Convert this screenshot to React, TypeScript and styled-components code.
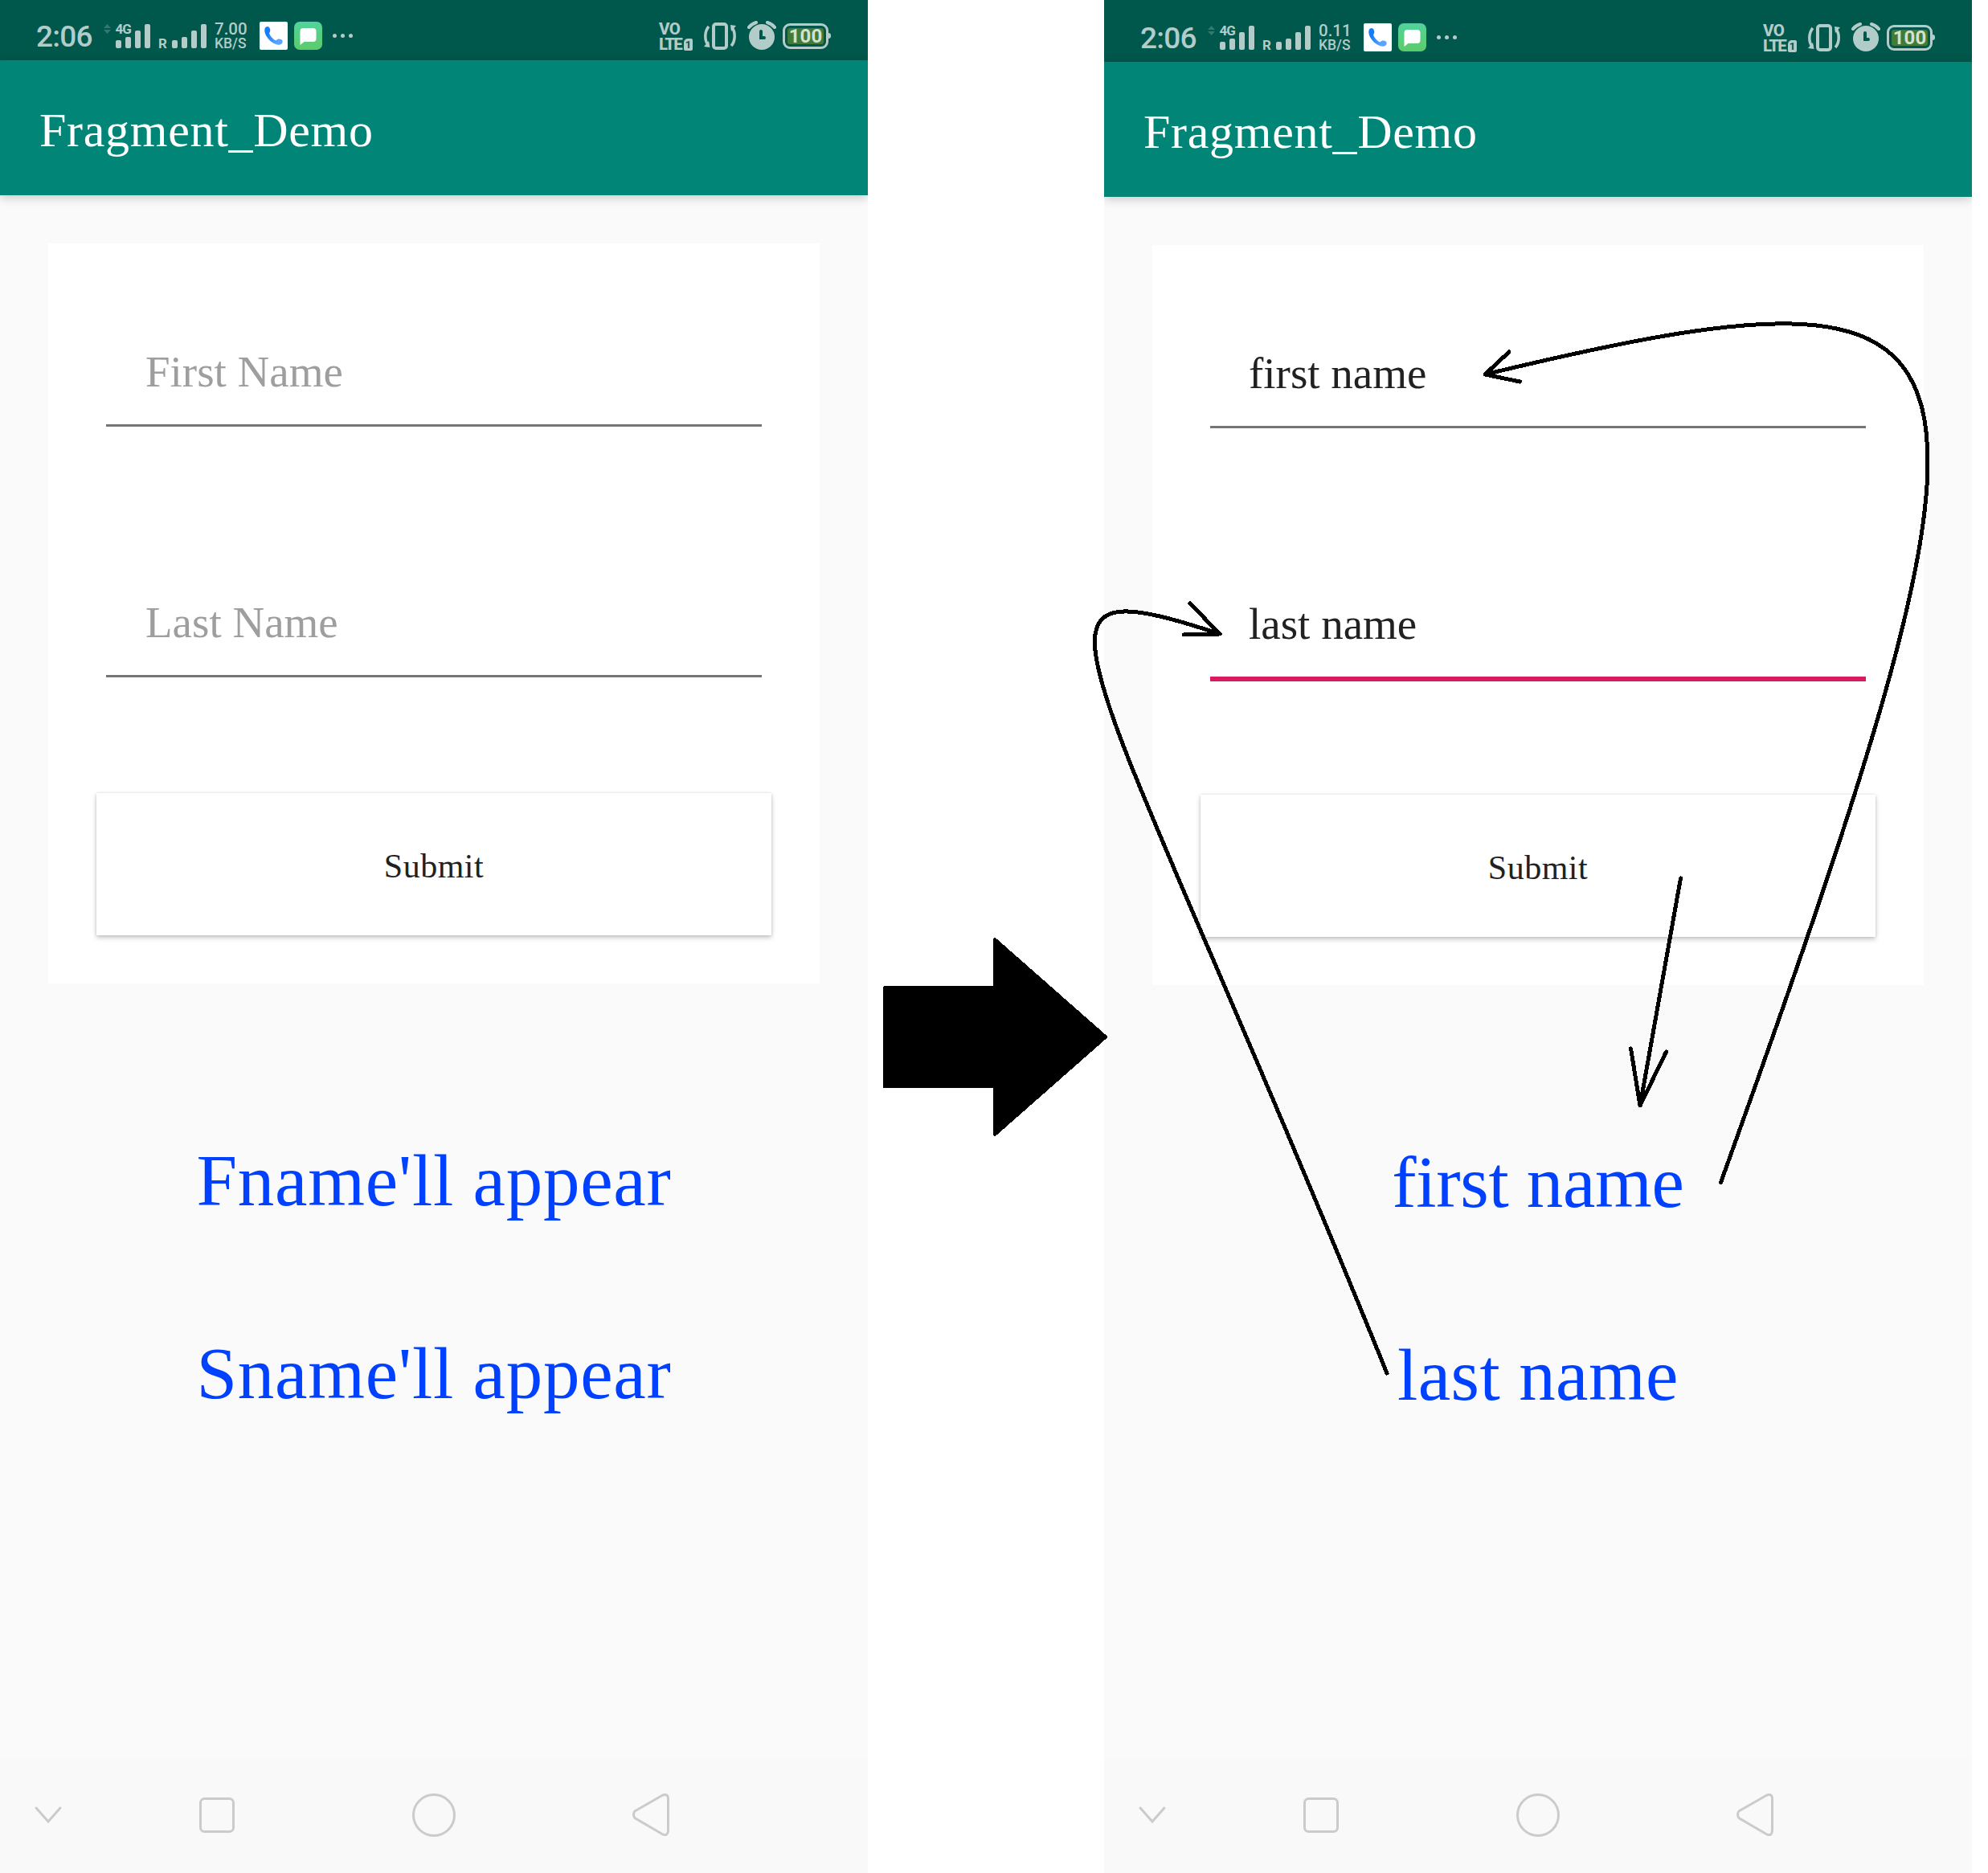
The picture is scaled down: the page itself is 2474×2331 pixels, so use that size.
import React from "react";
import styled, { createGlobalStyle } from "styled-components";

const SERIF = `"Liberation Serif", "Times New Roman", serif`;
const SANS = `Roboto, "Noto Sans", sans-serif`;
const STATUS_FG = "#b2ccc9";
const STATUS_BG = "#00574b";

const GlobalStyle = createGlobalStyle`
  html, body { margin: 0; padding: 0; background: #fff; }
  body { overflow: hidden; }
  * { box-sizing: border-box; }
`;

const Board = styled.main`
  position: relative;
  display: flex;
  align-items: flex-start;
  width: 2474px;
  height: 2331px;
  overflow: hidden;
  background: #fff;
`;

const Gutter = styled.div`
  flex: 0 0 294px;
`;

const Overlay = styled.svg`
  position: absolute;
  left: 0;
  top: 0;
  pointer-events: none;
`;

const Phone = styled.section<{ $lead: number }>`
  display: flex;
  flex-direction: column;
  flex: 0 0 1080px;
  height: 2331px;
  padding-top: ${(p) => p.$lead}px;
  background: linear-gradient(${STATUS_BG} 0 ${(p) => p.$lead}px, #fafafa ${(p) => p.$lead}px);
  overflow: hidden;
`;

const StatusBar = styled.header`
  display: flex;
  justify-content: space-between;
  align-items: flex-start;
  flex: 0 0 75px;
  padding: 25px 46px 0 45px;
  background: ${STATUS_BG};
  color: ${STATUS_FG};
  font-family: ${SANS};
  white-space: nowrap;
`;

const Cluster = styled.div`
  display: flex;
  align-items: flex-start;
  height: 40px;
`;

const Clock = styled.span`
  width: 82px;
  margin-top: 1px;
  font-size: 37px;
  line-height: 40px;
  font-weight: 500;
  letter-spacing: -0.8px;
`;

const Signal = styled.div<{ $width: number }>`
  display: flex;
  position: relative;
  width: ${(p) => p.$width}px;
  height: 36px;
`;

const NetLabel = styled.span<{ $left: number; $top: number }>`
  position: absolute;
  left: ${(p) => p.$left}px;
  top: ${(p) => p.$top}px;
  font-size: 17px;
  line-height: 18px;
  font-weight: 700;
  letter-spacing: -1px;
`;

const Stack = styled.div<{ $width: number }>`
  display: flex;
  flex-direction: column;
  width: ${(p) => p.$width}px;
  padding-top: 2px;
`;

const StackLine = styled.span<{ $size: number; $height: number; $weight?: number; $track?: number }>`
  font-size: ${(p) => p.$size}px;
  line-height: ${(p) => p.$height}px;
  font-weight: ${(p) => p.$weight ?? 500};
  letter-spacing: ${(p) => p.$track ?? 0}px;
`;

const AppTile = styled.div<{ $radius: number; $fill: string }>`
  display: flex;
  width: 35px;
  height: 35px;
  margin: 2px 8px 0 0;
  border-radius: ${(p) => p.$radius}px;
  background: ${(p) => p.$fill};
`;

const Dots = styled.div`
  display: flex;
  gap: 5.3px;
  margin: 17px 0 0 4.5px;
  span {
    width: 5px;
    height: 5px;
    border-radius: 50%;
    background: ${STATUS_FG};
  }
`;

const SimBadge = styled.span`
  width: 11px;
  height: 15px;
  margin: 23px 11px 0 0;
  border-radius: 2px;
  border-top-left-radius: 5px;
  background: ${STATUS_FG};
  color: ${STATUS_BG};
  font-size: 13px;
  line-height: 15px;
  font-weight: 700;
  text-align: center;
`;

const Battery = styled.div`
  display: flex;
  width: 57px;
  height: 32px;
  margin: 4px 0 0 8px;
  padding: 3px;
  border: 3px solid ${STATUS_FG};
  border-radius: 9px;
`;

const BatteryLevel = styled.span`
  flex: 1;
  border-radius: 3px;
  background: #427a38;
  color: #d3e2cd;
  font-size: 24px;
  line-height: 21px;
  font-weight: 700;
  text-align: center;
`;

const BatteryNub = styled.span`
  width: 3px;
  height: 7px;
  margin-top: 16px;
  border-radius: 0 4px 4px 0;
  background: ${STATUS_FG};
`;

const AppBar = styled.div`
  display: flex;
  align-items: center;
  flex: 0 0 168px;
  padding: 5px 49px 0;
  background: #008577;
  box-shadow: 0 3px 12px rgba(0, 0, 0, 0.2);
`;

const Title = styled.h1`
  margin: 0;
  color: #fff;
  font-family: ${SERIF};
  font-size: 60px;
  line-height: 76px;
  font-weight: 400;
  letter-spacing: 0.7px;
`;

const Body = styled.div`
  display: flex;
  flex-direction: column;
  align-items: center;
  flex: 1;
  padding-top: 60px;
`;

const Card = styled.form`
  display: flex;
  flex-direction: column;
  width: 960px;
  height: 921px;
  padding: 123px 60px 60px;
  background: #fff;
`;

const Fields = styled.div`
  display: flex;
  flex-direction: column;
  gap: 207px;
  height: 561px;
  padding: 0 12px;
`;

const Field = styled.div<{ $filled: boolean; $active: boolean }>`
  height: ${(p) => (p.$active ? 108 : 105)}px;
  padding-left: ${(p) => (p.$filled ? 48 : 49)}px;
  border-bottom: ${(p) => (p.$active ? "6px solid #d81b60" : "3px solid #757575")};
  color: ${(p) => (p.$filled ? "#212121" : "#9e9e9e")};
  font-family: ${SERIF};
  font-size: 55px;
  line-height: 74px;
`;

const Submit = styled.button`
  width: 840px;
  height: 177px;
  padding: 4px 0 0;
  border: 0;
  background: #fff;
  box-shadow: 0 3px 6px rgba(0, 0, 0, 0.22), 0 0 3px rgba(0, 0, 0, 0.12);
  color: #212121;
  font-family: ${SERIF};
  font-size: 42px;
  letter-spacing: 0.5px;
`;

const Results = styled.div`
  display: flex;
  flex-direction: column;
  align-items: center;
  gap: 120px;
  margin-top: 186px;
`;

const ResultLine = styled.p<{ $track: number }>`
  margin: 0;
  color: #0040ff;
  font-family: ${SERIF};
  font-size: 91px;
  line-height: 120px;
  letter-spacing: ${(p) => p.$track}px;
`;

const NavBar = styled.footer`
  flex: 0 0 144px;
  height: 144px;
  background: #f9f9f9;
`;

const BAR_TOPS = [20, 16, 8, 0];

function Bars({ x }: { x: number }) {
  return (
    <svg width={x + 43} height="36" viewBox={`0 0 ${x + 43} 36`} fill={STATUS_FG}>
      {BAR_TOPS.map((top, i) => (
        <rect key={top} x={x + i * 12} y={5 + top} width="7" height={30 - top} rx="2" />
      ))}
    </svg>
  );
}

function PhoneGlyph() {
  return (
    <svg width="35" height="35" viewBox="0 0 34 35">
      <defs>
        <linearGradient id="handset" x1="0" y1="0" x2="1" y2="1">
          <stop offset="0.3" stopColor="#167cfb" />
          <stop offset="0.8" stopColor="#5aa5ff" />
        </linearGradient>
      </defs>
      <path
        fill="url(#handset)"
        d="M6 9C6 7 8 6 10 6C12 7 13.5 10 12.5 12.5L11.5 14.5C13 18.5 16 21.5 19.5 23.5L22 22C24 21 27 22 28 23.5C28.5 26 27.5 28 25 28.5C21 29.5 15 26.5 11 22C7.5 18 5 13 6 9Z"
      />
    </svg>
  );
}

function BubbleGlyph() {
  return (
    <svg width="35" height="35" viewBox="0 0 34 35">
      <path fill="#fff" d="M11 8H23Q27 8 27 12V21Q27 25 23 25H12L7 29V12Q7 8 11 8Z" />
    </svg>
  );
}

function VibrateGlyph() {
  return (
    <svg width="46" height="40" viewBox="0 0 46 40" fill="none" stroke={STATUS_FG}>
      <rect x="15" y="5" width="16" height="30" rx="3" strokeWidth="4" />
      <path d="M9 8C3.5 14 3.5 26 8.5 31" strokeWidth="3.5" />
      <path d="M37 32C42.5 26 42.5 14 37.5 9" strokeWidth="3.5" />
      <path d="M3 33L10.5 34L9 26Z M43 7L36 6L37 14Z" fill={STATUS_FG} stroke="none" />
    </svg>
  );
}

function AlarmGlyph() {
  return (
    <svg width="36" height="40" viewBox="0 0 36 40" fill="none">
      <circle cx="18" cy="21" r="16" fill={STATUS_FG} />
      <path d="M2 9Q5 5 11 3M34 9Q31 5 25 3" stroke={STATUS_FG} strokeWidth="4" strokeLinecap="round" />
      <path d="M17 14V22H21" stroke={STATUS_BG} strokeWidth="4" strokeLinecap="round" />
    </svg>
  );
}

const Spacer = styled.span`
  width: 11px;
`;

function Status({ speed }: { speed: string }) {
  return (
    <StatusBar>
      <Cluster>
        <Clock>2:06</Clock>
        <Signal $width={69}>
          <svg width="17" height="36" viewBox="0 0 17 36" fill="#33796f">
            <path d="M2 10L6.500 5L11 10ZM2 12L6.500 17L11 12Z" />
          </svg>
          <NetLabel $left={16.5} $top={2}>4G</NetLabel>
          <Bars x={0} />
        </Signal>
        <Signal $width={71}>
          <NetLabel $left={1} $top={20}>R</NetLabel>
          <Bars x={18} />
        </Signal>
        <Stack $width={56}>
          <StackLine $size={20.5} $height={19}>{speed}</StackLine>
          <StackLine $size={17.5} $height={16}>KB/S</StackLine>
        </Stack>
        <AppTile $radius={2} $fill="#fff"><PhoneGlyph /></AppTile>
        <AppTile $radius={7} $fill="linear-gradient(#52d39c, #5ccb6a)"><BubbleGlyph /></AppTile>
        <Dots><span /><span /><span /></Dots>
      </Cluster>
      <Cluster>
        <Stack $width={31}>
          <StackLine $size={20.5} $height={19} $weight={800} $track={-0.5}>VO</StackLine>
          <StackLine $size={20.5} $height={18} $weight={800} $track={-1.8}>LTE</StackLine>
        </Stack>
        <SimBadge>1</SimBadge>
        <VibrateGlyph />
        <Spacer />
        <AlarmGlyph />
        <Battery><BatteryLevel>100</BatteryLevel></Battery>
        <BatteryNub />
      </Cluster>
    </StatusBar>
  );
}

function Nav() {
  return (
    <NavBar>
      <svg width="1080" height="144" viewBox="0 2187 1080 144" fill="none" stroke="#cbcbcb" strokeWidth="3">
        <path d="M45 2250L60 2267L75 2250" strokeLinecap="round" />
        <rect x="249.5" y="2238.5" width="41" height="41" rx="5" />
        <circle cx="540" cy="2259" r="25.5" />
        <path d="M790 2254L824 2234.5Q831 2231.5 831.5 2238V2278Q831 2286 824 2282.5L790 2262.5Q787 2258.5 790 2254Z" />
      </svg>
    </NavBar>
  );
}

interface Result {
  text: string;
  track: number;
}

interface ScreenProps {
  lead: number;
  speed: string;
  fields: string[];
  results: Result[];
  filled?: boolean;
}

function Screen({ lead, speed, fields, results, filled = false }: ScreenProps) {
  return (
    <Phone $lead={lead}>
      <Status speed={speed} />
      <AppBar><Title>Fragment_Demo</Title></AppBar>
      <Body>
        <Card>
          <Fields>
            {fields.map((text, i) => (
              <Field key={text} $filled={filled} $active={filled && i === 1}>{text}</Field>
            ))}
          </Fields>
          <Submit type="button">Submit</Submit>
        </Card>
        <Results>
          {results.map(({ text, track }) => (
            <ResultLine key={text} $track={track}>{text}</ResultLine>
          ))}
        </Results>
      </Body>
      <Nav />
    </Phone>
  );
}

function Annotations() {
  return (
    <Overlay width="2474" height="2331" viewBox="0 0 2474 2331" shapeRendering="crispEdges">
      <path
        d="M1101 1229H1238V1169L1376 1290.5L1238 1412V1352H1101Z"
        stroke="#000"
        strokeWidth="4"
        strokeLinejoin="round"
      />
      <g fill="none" stroke="#000" strokeWidth="5" strokeLinecap="round" strokeLinejoin="round">
        <path d="M1726 1709C1353 789 1238 697 1518 789" />
        <path d="M1481 751L1518 789L1473 790" />
        <path d="M2141.5 1471.5C2532 386 2512 306 1848 466" />
        <path d="M1878 438L1848 466L1891.5 475" />
        <path d="M2091.500 1093L2041 1376" />
        <path d="M2029.5 1305L2041 1376L2073.5 1309" />
      </g>
    </Overlay>
  );
}

export default function App() {
  return (
    <>
      <GlobalStyle />
      <Board>
        <Screen
          lead={0}
          speed="7.00"
          fields={["First Name", "Last Name"]}
          results={[
            { text: "Fname'll appear", track: 0.75 },
            { text: "Sname'll appear", track: 0.75 },
          ]}
        />
        <Gutter />
        <Screen
          lead={2}
          speed="0.11"
          filled
          fields={["first name", "last name"]}
          results={[
            { text: "first name", track: -0.3 },
            { text: "last name", track: 0.4 },
          ]}
        />
        <Annotations />
      </Board>
    </>
  );
}
